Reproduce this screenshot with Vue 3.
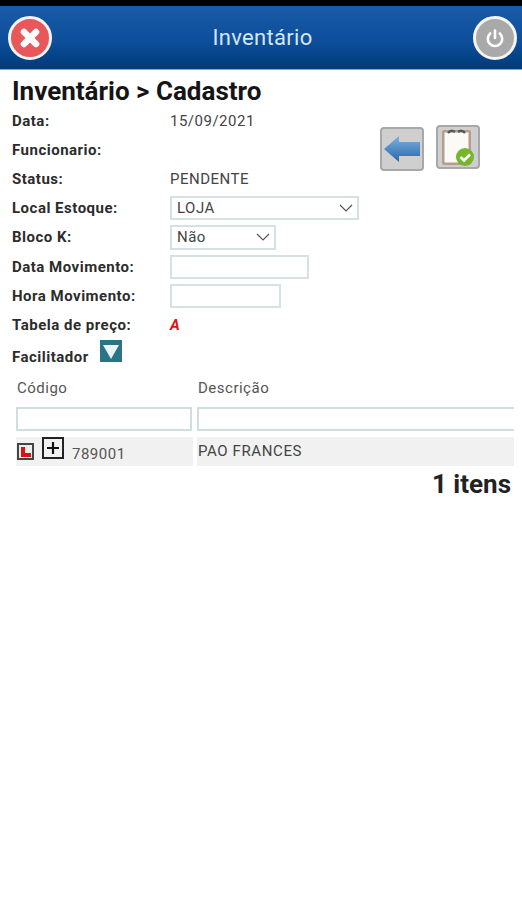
<script setup>
const fields = [
  { label: 'Data:', value: '15/09/2021' },
  { label: 'Funcionario:', value: '' },
  { label: 'Status:', value: 'PENDENTE' }
];
</script>

<template>
  <div class="page">
    <div class="statusbar"></div>
    <header class="topbar">
      <button class="round close">
        <svg width="26" height="26" viewBox="0 0 26 26">
          <path d="M7 7 L19 19 M19 7 L7 19" stroke="#fff" stroke-width="6.5" stroke-linecap="round" />
        </svg>
      </button>
      <span class="title">Inventário</span>
      <button class="round power">
        <svg width="26" height="26" viewBox="0 0 26 26" fill="none" stroke="#fff" stroke-width="2.6" stroke-linecap="round">
          <path d="M8.2 8.5 A7.2 7.2 0 1 0 17.8 8.5" />
          <path d="M13 5.5 V13" />
        </svg>
      </button>
    </header>

    <main class="content">
      <h1>Inventário &gt; Cadastro</h1>

      <div class="form">
        <div class="actions">
          <button class="tool">
            <svg width="36" height="26" viewBox="0 0 36 26">
              <defs>
                <linearGradient id="arrow" x1="0" y1="0" x2="0" y2="1">
                  <stop offset="0" stop-color="#7fb2de" />
                  <stop offset="1" stop-color="#2566ad" />
                </linearGradient>
              </defs>
              <path d="M0 13 L15 0 V6 H36 V20 H15 V26 Z" fill="url(#arrow)" />
            </svg>
          </button>
          <button class="tool clip">
            <svg width="40" height="40" viewBox="0 0 40 40">
              <rect x="4" y="3" width="29" height="35" rx="2" fill="#b79c8c" />
              <rect x="6.5" y="5.5" width="24" height="30" fill="#fbfaf6" />
              <path d="M10 6 Q13 2 17 5 M27 6 Q24 2 20 5" stroke="#555" stroke-width="2.2" fill="none" />
              <circle cx="27" cy="30" r="9" fill="#76b52c" />
              <path d="M22.5 30 L26 33.5 L32 27.5" stroke="#fff" stroke-width="2.6" fill="none" />
            </svg>
          </button>
        </div>

        <div v-for="f in fields" :key="f.label" class="row">
          <label>{{ f.label }}</label>
          <span class="value">{{ f.value }}</span>
        </div>

        <div class="row">
          <label>Local Estoque:</label>
          <div class="box select local">
            <span>LOJA</span>
            <svg width="14" height="8" viewBox="0 0 14 8"><path d="M1 1 L7 7 L13 1" fill="none" stroke="#555" stroke-width="1.2" /></svg>
          </div>
        </div>
        <div class="row">
          <label>Bloco K:</label>
          <div class="box select bloco">
            <span>Não</span>
            <svg width="14" height="8" viewBox="0 0 14 8"><path d="M1 1 L7 7 L13 1" fill="none" stroke="#555" stroke-width="1.2" /></svg>
          </div>
        </div>
        <div class="row">
          <label>Data Movimento:</label>
          <div class="box data"></div>
        </div>
        <div class="row">
          <label>Hora Movimento:</label>
          <div class="box hora"></div>
        </div>
        <div class="row">
          <label>Tabela de preço:</label>
          <span class="tabela">A</span>
        </div>
        <div class="facilitador">
          <label>Facilitador</label>
          <svg class="down" width="22" height="22" viewBox="0 0 22 22">
            <rect width="22" height="22" fill="#2a7488" />
            <path d="M3 5 H19 L11 19 Z" fill="#e8f4f6" />
          </svg>
        </div>
      </div>

      <div class="grid">
        <div class="head">Código</div>
        <div class="head">Descrição</div>
        <div class="box filter first"></div>
        <div class="box filter last"></div>
        <div class="cell code">
          <span class="mark"><i></i></span>
          <span class="plus">
            <svg width="16" height="16" viewBox="0 0 16 16"><path d="M8 2 V14 M2 8 H14" stroke="#111" stroke-width="2.2" /></svg>
          </span>
          <span class="num">789001</span>
        </div>
        <div class="cell desc">PAO FRANCES</div>
      </div>
      <div class="total">1 itens</div>
    </main>
  </div>
</template>

<style scoped>
.page {
  width: 522px;
  height: 900px;
  background: #fff;
  overflow: hidden;
  font-family: Roboto, "Liberation Sans", sans-serif;
  color: #333;
}
.statusbar {
  height: 6px;
  background: #000;
}
.topbar {
  height: 63px;
  display: flex;
  align-items: center;
  justify-content: space-between;
  padding: 0 5px 0 8px;
  background: linear-gradient(#1a5aa6, #0d4f9c 55%, #003a78);
  border-bottom: 1px solid #8aa6d0;
  box-sizing: content-box;
}
.round {
  width: 44px;
  height: 44px;
  padding: 0;
  border-radius: 50%;
  border: 3px solid #f4f4f4;
  box-sizing: border-box;
  display: flex;
  align-items: center;
  justify-content: center;
}
.close {
  background: #e8585a;
}
.power {
  background: #a9a9a9;
}
.title {
  font-size: 22px;
  color: #d5e6f5;
  letter-spacing: 0.3px;
}
.content {
  padding: 0 8px 0 12px;
}
h1 {
  margin: 6px 0 0;
  font-size: 26px;
  line-height: 30px;
  font-weight: 700;
  color: #151515;
}
.form {
  position: relative;
}
.actions {
  position: absolute;
  top: 19px;
  left: 368px;
  display: flex;
  gap: 12px;
  align-items: flex-start;
}
.tool {
  width: 44px;
  height: 44px;
  margin-top: 2px;
  padding: 0;
  border: 2px solid #a8a8a8;
  border-radius: 4px;
  background: #cfcfcf;
  display: flex;
  align-items: center;
  justify-content: center;
}
.tool.clip {
  margin-top: 0;
  overflow: hidden;
}
.row {
  height: 29.2px;
  display: flex;
  align-items: center;
}
label {
  width: 158px;
  flex: none;
  font-size: 15px;
  letter-spacing: 0.5px;
  font-weight: 700;
  color: #2c2c2c;
}
.value {
  font-size: 15px;
  color: #444;
  letter-spacing: 0.5px;
}
.box {
  height: 24px;
  border: 2px solid #d5e2e4;
  box-sizing: border-box;
  background: #fff;
}
.select {
  display: flex;
  align-items: center;
  justify-content: space-between;
  padding: 0 4px 0 5px;
  font-size: 15px;
  color: #444;
  letter-spacing: 0.5px;
}
.local {
  width: 189px;
}
.bloco {
  width: 106px;
  height: 25px;
}
.data {
  width: 139px;
}
.hora {
  width: 111px;
}
.tabela {
  font-size: 15px;
  font-weight: 700;
  font-style: italic;
  color: #e01010;
}
.facilitador {
  height: 30px;
  display: flex;
  align-items: center;
}
.facilitador label {
  width: auto;
  margin-top: 4px;
}
.down {
  margin: -7px 0 0 11px;
}
.grid {
  margin: 5px 0 0 4px;
  display: grid;
  grid-template-columns: 177px 1fr;
  column-gap: 4px;
}
.head {
  height: 26px;
  padding-left: 1px;
  font-size: 15px;
  letter-spacing: 0.5px;
  line-height: 26px;
  color: #555;
}
.filter {
  height: 24px;
  margin-top: 6px;
  border-color: #cfdfe0;
}
.filter.first {
  margin-right: 1px;
}
.filter.last {
  border-right: none;
}
.cell {
  height: 29px;
  margin-top: 6px;
  background: #f1f1f1;
  display: flex;
  align-items: center;
  font-size: 15px;
  letter-spacing: 0.6px;
  color: #444;
}
.code {
  padding-left: 1px;
}
.mark {
  width: 17px;
  height: 17px;
  border: 2px solid #444;
  box-sizing: border-box;
  background: #eee;
  position: relative;
}
.mark i {
  position: absolute;
  left: 2px;
  top: 2px;
  width: 10px;
  height: 10px;
  background: linear-gradient(to right, #e01010 4px, transparent 4px), linear-gradient(to top, #e01010 4px, transparent 4px);
}
.plus {
  width: 22px;
  height: 22px;
  margin: -6px 0 0 8px;
  border: 2px solid #222;
  box-sizing: border-box;
  display: flex;
  align-items: center;
  justify-content: center;
}
.num {
  margin: 6px 0 0 8px;
  font-size: 15px;
  color: #555;
  letter-spacing: 0.5px;
}
.desc {
  padding-left: 1px;
}
.total {
  margin-top: 3px;
  text-align: right;
  padding-right: 3px;
  font-size: 26px;
  line-height: 30px;
  font-weight: 700;
  color: #222;
}
</style>
